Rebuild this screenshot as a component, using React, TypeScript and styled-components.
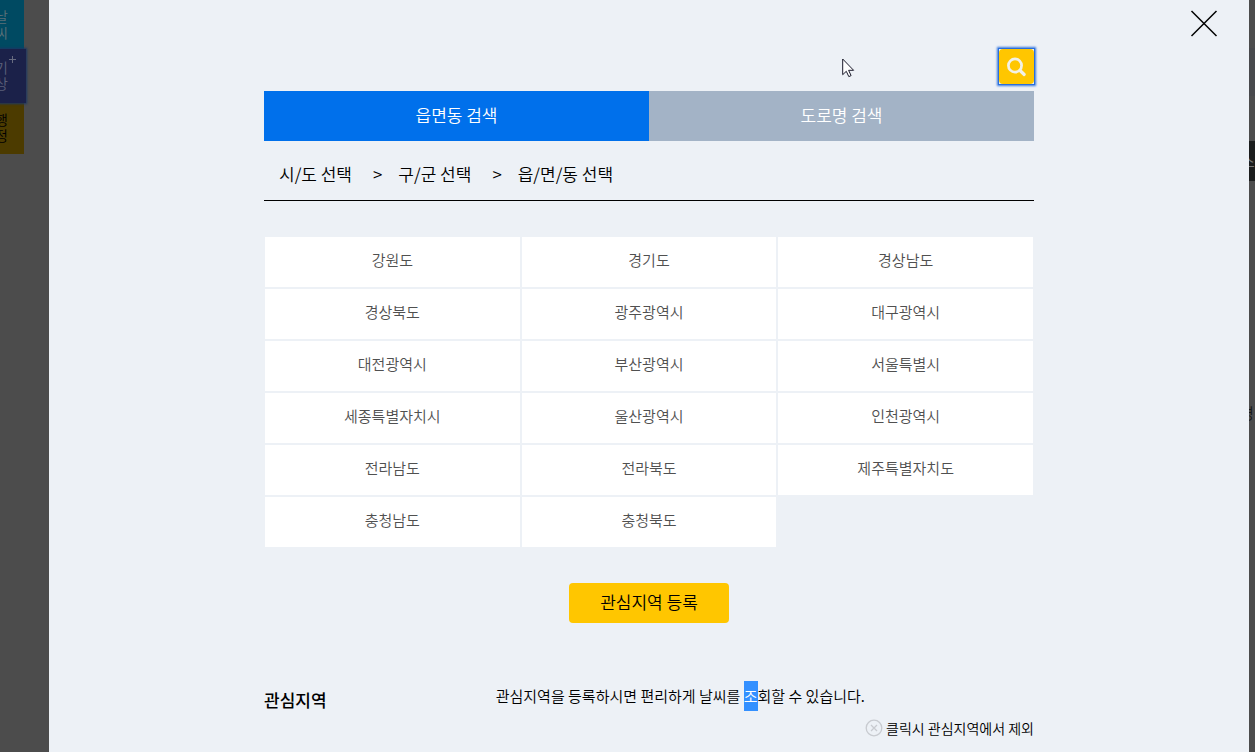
import React, { useState } from 'react';
import styled, { createGlobalStyle } from 'styled-components';

const GlobalStyle = createGlobalStyle`
  *, *::before, *::after { box-sizing: border-box; }
  body {
    margin: 0;
    background: #4c4c4c;
    color: #000;
    font-family: "Noto Sans CJK KR", "Liberation Sans", sans-serif;
    font-size: 15px;
    font-weight: 350;
    line-height: 30px;
  }
  button { font: inherit; color: inherit; border: 0; padding: 0; cursor: pointer; }
  h2, p, ol, ul { margin: 0; padding: 0; }
  ol, ul { list-style: none; }
`;

const Page = styled.div`
  display: flex;
  min-height: 100vh;
  overflow: hidden;
`;

const LeftRail = styled.nav`
  flex: 0 0 49px;
  display: flex;
  flex-direction: column;
  align-items: flex-start;
  overflow: hidden;
`;

const RailTab = styled.a<{ $bg: string; $ink: string; $current?: boolean }>`
  position: relative;
  display: flex;
  flex-direction: column;
  justify-content: center;
  width: ${p => (p.$current ? 26 : 24)}px;
  height: ${p => (p.$current ? 54 : 51)}px;
  margin: ${p => (p.$current ? '-2px 0 0' : '0')};
  padding-bottom: 3px;
  background: ${p => p.$bg};
  color: ${p => p.$ink};
  box-shadow: ${p => (p.$current ? '0 0 2px 1px #1b3764' : 'none')};
  z-index: ${p => (p.$current ? 1 : 0)};
  font-size: 14px;
  line-height: 16px;
  text-decoration: none;
  span { margin-left: -5px; }
`;

const Plus = styled.svg`
  position: absolute;
  top: 7px;
  right: 10px;
`;

const RightRail = styled.aside`
  flex: 0 0 6px;
  overflow: hidden;
  padding-top: 48px;
  white-space: nowrap;
`;

const RailBand = styled.div`
  height: 48px;
  background: #48494c;
`;

const RailSearch = styled.div`
  height: 40px;
  margin-top: 45px;
  background: #1b1d1d;
  color: #777;
  line-height: 40px;
  span { margin-left: -8px; }
`;

const RailNote = styled.div`
  margin-top: 217px;
  color: #151515;
  span { margin-left: -9px; }
`;

const Dialog = styled.main`
  position: relative;
  flex: 1;
  min-width: 0;
  background: #edf1f6;
`;

const DialogTop = styled.header`
  display: flex;
  justify-content: flex-end;
  padding: 10px 31px 0;
`;

const CloseButton = styled.button`
  display: block;
  width: 28px;
  height: 28px;
  background: none;
  svg { display: block; }
`;

const Content = styled.div`
  max-width: 770px;
  margin: 0 auto;
`;

const SearchBar = styled.div`
  display: flex;
  justify-content: flex-end;
  padding: 11px 0 7px;
`;

const SearchButton = styled.button`
  display: grid;
  place-items: center;
  width: 35px;
  height: 35px;
  border-radius: 4px;
  background: #ffc600;
  position: relative;
  &::before {
    content: "";
    position: absolute;
    inset: -1px;
    border: 1px solid #2a6fdc;
    box-shadow: 0 0 2px 1px #3a79dd;
  }
`;

const Tabs = styled.div`
  display: flex;
`;

const Tab = styled.button<{ $active: boolean }>`
  flex: 1;
  height: 50px;
  padding-bottom: 2px;
  background: ${p => (p.$active ? '#0070eb' : '#a3b3c6')};
  color: #fff;
  font-size: 17px;
`;

const Steps = styled.ol`
  display: flex;
  height: 60px;
  padding: 18px 15px 0;
  border-bottom: 1px solid #000;
  font-size: 17px;
  li + li::before {
    content: ">";
    padding: 0 16px 0 21px;
  }
`;

const RegionGrid = styled.ul`
  display: grid;
  grid-template-columns: repeat(3, 1fr);
  gap: 2px;
  margin: 36px 1px;
`;

const RegionButton = styled.button`
  display: block;
  width: 100%;
  height: 50px;
  padding-bottom: 4px;
  background: #fff;
  color: #505050;
  font-size: 15px;
`;

const RegisterButton = styled.button`
  display: block;
  width: 160px;
  height: 40px;
  margin: 0 auto;
  padding-bottom: 2px;
  border-radius: 4px;
  background: #ffc600;
  font-size: 17px;
`;

const Favorites = styled.section`
  display: flex;
  align-items: flex-start;
  margin-top: 58px;
`;

const FavoritesTitle = styled.h2`
  padding-top: 4px;
  font-size: 17px;
  font-weight: 500;
`;

const FavoritesText = styled.p`
  flex: 1;
  text-align: center;
`;

const Selected = styled.mark`
  display: inline-block;
  background: #3390ff;
  color: #fff;
`;

const RemoveNote = styled.p`
  display: flex;
  justify-content: flex-end;
  align-items: center;
  gap: 3px;
  line-height: 26px;
  padding-bottom: 10px;
  font-size: 14px;
`;

const Pointer = styled.svg`
  position: absolute;
  left: 793px;
  top: 58px;
  pointer-events: none;
`;

const regions = [
  '강원도', '경기도', '경상남도', '경상북도', '광주광역시', '대구광역시',
  '대전광역시', '부산광역시', '서울특별시', '세종특별자치시', '울산광역시', '인천광역시',
  '전라남도', '전라북도', '제주특별자치도', '충청남도', '충청북도',
];
const tabs = ['읍면동 검색', '도로명 검색'];
const steps = ['시/도 선택', '구/군 선택', '읍/면/동 선택'];

export default function App() {
  const [active, setActive] = useState(0);
  return (
    <>
      <GlobalStyle />
      <Page>
        <LeftRail>
          <RailTab href="#weather" $bg="#004a62" $ink="#5c7078"><span>날</span><span>씨</span></RailTab>
          <RailTab href="#kma" $bg="#1b2149" $ink="#5c607a" $current>
            <span>기</span><span>상</span>
            <Plus width="7" height="7" viewBox="0 0 7 7" stroke="#686c80" aria-hidden="true">
              <path d="M3.5 0v7M0 3.5h7" />
            </Plus>
          </RailTab>
          <RailTab href="#admin" $bg="#4c3b00" $ink="#000"><span>행</span><span>정</span></RailTab>
        </LeftRail>
        <Dialog>
          <DialogTop>
            <CloseButton aria-label="닫기">
              <svg width="28" height="28" viewBox="0 0 28 28" fill="none" stroke="#000" strokeWidth="1.5" aria-hidden="true">
                <path d="M1.5 1l25 25M26.5 1l-25 25" />
              </svg>
            </CloseButton>
          </DialogTop>
          <Content>
            <SearchBar>
              <SearchButton aria-label="검색">
                <svg width="20" height="20" viewBox="0 0 20 20" fill="none" stroke="#f2f1e8" aria-hidden="true">
                  <circle cx="8" cy="8.5" r="6.6" strokeWidth="2.7" />
                  <path d="M13 13.5l4.2 4" strokeWidth="3.2" strokeLinecap="round" />
                </svg>
              </SearchButton>
            </SearchBar>
            <Tabs role="tablist">
              {tabs.map((label, i) => (
                <Tab key={label} role="tab" aria-selected={active === i} $active={active === i} onClick={() => setActive(i)}>
                  {label}
                </Tab>
              ))}
            </Tabs>
            <Steps>
              {steps.map(step => <li key={step}>{step}</li>)}
            </Steps>
            <RegionGrid>
              {regions.map(name => (
                <li key={name}><RegionButton>{name}</RegionButton></li>
              ))}
            </RegionGrid>
            <RegisterButton>관심지역 등록</RegisterButton>
            <Favorites>
              <FavoritesTitle>관심지역</FavoritesTitle>
              <FavoritesText>관심지역을 등록하시면 편리하게 날씨를 <Selected>조</Selected>회할 수 있습니다.</FavoritesText>
            </Favorites>
            <RemoveNote>
              <svg width="18" height="18" viewBox="0 0 18 18" fill="none" stroke="#c8cbd0" aria-hidden="true">
                <circle cx="9" cy="9" r="7.8" strokeWidth="1.3" />
                <path d="M6 6l6 6M12 6l-6 6" strokeWidth="1.3" />
              </svg>
              클릭시 관심지역에서 제외
            </RemoveNote>
          </Content>
          <Pointer width="13" height="20" viewBox="0 0 13 20" aria-hidden="true">
            <path d="M.7 1v15.7l3.6-3.4 2.5 5.3 2.3-1-2.5-5.3h5z" fill="#fff" stroke="#1a1a2a" />
          </Pointer>
        </Dialog>
        <RightRail>
          <RailBand />
          <RailSearch><span>스</span></RailSearch>
          <RailNote><span>경</span></RailNote>
        </RightRail>
      </Page>
    </>
  );
}
